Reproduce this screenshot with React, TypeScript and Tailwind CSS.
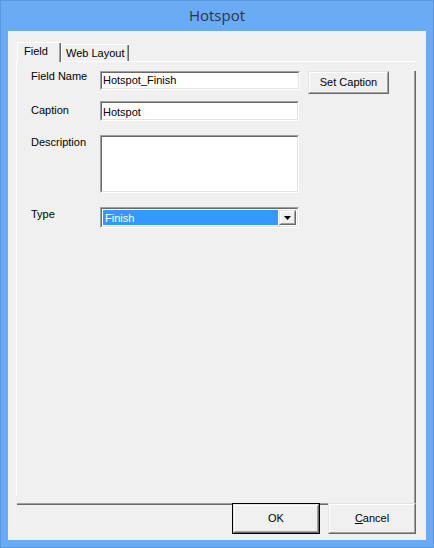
import React from 'react';

const ui = "font-['Liberation_Sans',Arial,sans-serif] text-[11px] leading-[13px] text-black";

/** Classic sunken edit box (2px 3D border) */
function Sunken({ className, children }: { className: string; children?: React.ReactNode }) {
  return (
    <div className={`border border-t-[#a0a0a0] border-l-[#a0a0a0] border-b-white border-r-white ${className}`}>
      <div className="h-full w-full border border-t-[#696969] border-l-[#696969] border-b-[#e3e3e3] border-r-[#e3e3e3] bg-white">
        {children}
      </div>
    </div>
  );
}

/** Classic raised push button */
function Raised({ className, children }: { className: string; children?: React.ReactNode }) {
  return (
    <div className={`border border-t-[#e3e3e3] border-l-[#e3e3e3] border-b-[#696969] border-r-[#696969] ${className}`}>
      <div className="flex h-full w-full items-center justify-center border border-t-white border-l-white border-b-[#a0a0a0] border-r-[#a0a0a0] bg-[#f0f0f0]">
        {children}
      </div>
    </div>
  );
}

function Label({ text, pad }: { text: string; pad: string }) {
  return <div className={`w-[69px] shrink-0 ${pad}`}>{text}</div>;
}

export default function App() {
  return (
    <div className="flex h-[548px] w-[434px] flex-col border border-[#5b98e0] bg-[#6aabf6]">
      {/* Title bar */}
      <div className="flex h-[30px] shrink-0 items-center justify-center pb-[1px] font-['Open_Sans','Noto_Sans',sans-serif] text-[15px] text-[#2c3644]">
        Hotspot
      </div>

      {/* Client area */}
      <div className={`mx-[7px] mb-[7px] flex h-[509px] flex-col bg-[#f0f0f0] pl-[8px] pt-[11px] ${ui}`}>
        {/* Tabs */}
        <div className="flex h-[20px] items-end pl-[1px]">
          <div className="relative z-10 flex h-[20px] w-[44px] border-l border-t border-white">
            <div className="flex h-full flex-1 border-r border-[#696969]">
              <div className="flex-1 border-r border-[#a0a0a0] bg-[#f0f0f0] pl-[6px] pt-[2px]">Field</div>
            </div>
          </div>
          <div className="mb-[1px] flex h-[17px] w-[68px] border-l border-t border-white">
            <div className="flex h-full flex-1 border-r border-[#696969]">
              <div className="flex-1 border-r border-[#a0a0a0] pl-[4px] pt-[2px]">Web Layout</div>
            </div>
          </div>
        </div>

        {/* Tab panel */}
        <div className="-mt-px h-[435px] w-[400px] border-l border-t border-white">
          <div className="h-full w-full border-b border-r border-[#696969]">
            <div className="h-full w-full border-b border-r border-[#a0a0a0] pl-[14px]">
              {/* Field Name */}
              <div className="mt-[9px] flex items-start">
                <Label text="Field Name" pad="-mt-px" />
                <Sunken className="h-[19px] w-[200px]">
                  <div className="pl-[1px] pt-[1px] text-[11px]">Hotspot_Finish</div>
                </Sunken>
                <Raised className="ml-[8px] h-[23px] w-[81px]">Set Caption</Raised>
              </div>

              {/* Caption */}
              <div className="mt-[7px] flex items-start">
                <Label text="Caption" pad="pt-[3px]" />
                <Sunken className="h-[20px] w-[199px]">
                  <div className="pl-[1px] pt-[3px]">Hotspot</div>
                </Sunken>
              </div>

              {/* Description */}
              <div className="mt-[14px] flex items-start">
                <Label text="Description" pad="pt-[1px]" />
                <Sunken className="h-[58px] w-[199px]" />
              </div>

              {/* Type */}
              <div className="mt-[14px] flex items-start">
                <Label text="Type" pad="pt-[1px]" />
                <Sunken className="h-[21px] w-[199px]">
                  <div className="flex h-full items-stretch p-[1px]">
                    <div className="flex-1 bg-[#3399ff] pl-[2px] pt-[2px] text-white">Finish</div>
                    <Raised className="ml-[1px] w-[17px]">
                      <svg width="7" height="4" viewBox="0 0 7 4">
                        <path d="M0 0H7L3.5 4Z" fill="#000" />
                      </svg>
                    </Raised>
                  </div>
                </Sunken>
              </div>
            </div>
          </div>
        </div>

        {/* Dialog buttons */}
        <div className="mr-[10px] mt-[7px] flex justify-end gap-[8px]">
          <div className="h-[31px] w-[88px] border border-black">
            <Raised className="h-full w-full">OK</Raised>
          </div>
          <Raised className="h-[31px] w-[88px]">
            <span>
              <span className="underline">C</span>ancel
            </span>
          </Raised>
        </div>
      </div>
    </div>
  );
}
